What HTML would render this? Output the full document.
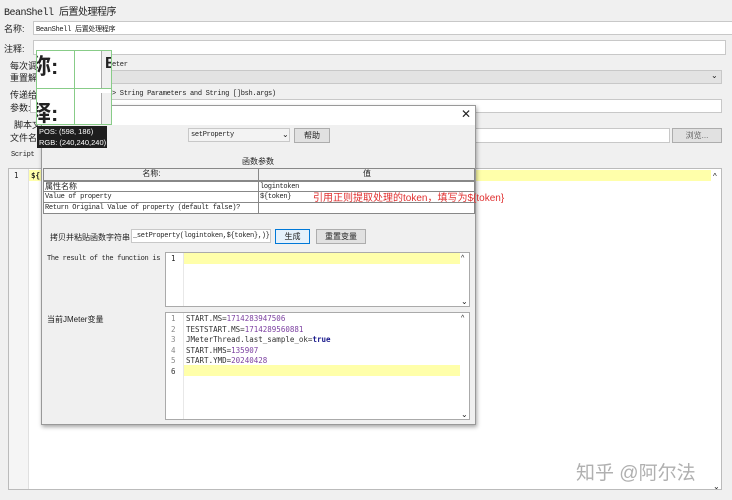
<!DOCTYPE html>
<html><head><meta charset="utf-8"><style>
*{box-sizing:border-box;margin:0;padding:0}
body{width:732px;height:500px;background:#f0f0f0;font-family:"Liberation Sans","Noto Sans CJK SC",sans-serif;font-size:9px;color:#222;position:relative;overflow:hidden}
.a{position:absolute;white-space:nowrap}
.in{position:absolute;background:#fff;border:1px solid #c8c8c8}
.mono{font-family:"Liberation Mono","Noto Sans CJK SC",monospace;font-size:7px;letter-spacing:-0.3px}
.btn{position:absolute;background:#e1e1e1;border:1px solid #adadad;text-align:center;font-size:8px}
.cell{position:absolute;border:1px solid #888;background:#fff;font-family:"Liberation Mono","Noto Sans CJK SC",monospace;font-size:7px;letter-spacing:-0.3px;padding-left:1px;line-height:10px;overflow:hidden}
.code{font-family:"DejaVu Sans Mono",monospace;font-size:7.5px;line-height:10.5px}
</style></head><body>
<div class="a" style="left:4px;top:3px;font-size:10px;font-family:'Liberation Mono','Noto Sans CJK SC',monospace;letter-spacing:-0.5px">BeanShell 后置处理程序</div>
<div class="a" style="left:4px;top:22px">名称:</div>
<div class="in" style="left:33px;top:21px;width:700px;height:14px"></div>
<div class="a mono" style="left:36px;top:24px">BeanShell 后置处理程序</div>
<div class="a" style="left:4px;top:42px">注释:</div>
<div class="in" style="left:33px;top:40px;width:693px;height:15px"></div>
<div class="a" style="left:10px;top:59px">每次调</div>
<div class="a" style="left:10px;top:71px">重置解释</div>
<div class="a mono" style="left:112px;top:61px">eter</div>
<div class="in" style="left:100px;top:70px;width:622px;height:14px;background:#e3e3e3"></div>
<div class="a" style="left:711px;top:71px;font-size:8px">⌄</div>
<div class="a" style="left:10px;top:88px">传递给</div>
<div class="a mono" style="left:112px;top:90px">&gt; String Parameters and String []bsh.args)</div>
<div class="a" style="left:10px;top:101px">参数:</div>
<div class="in" style="left:30px;top:99px;width:692px;height:14px"></div>
<div class="a" style="left:14px;top:118px">脚本文</div>
<div class="a" style="left:10px;top:131px">文件名:</div>
<div class="in" style="left:40px;top:128px;width:630px;height:15px"></div>
<div class="btn" style="left:672px;top:128px;width:50px;height:15px;line-height:13px;color:#666">浏览...</div>
<div class="a mono" style="left:11px;top:151px">Script</div>
<div class="in" style="left:8px;top:168px;width:714px;height:322px;border-color:#bbb"></div>
<div class="a" style="left:9px;top:169px;width:20px;height:320px;background:#f5f5f5;border-right:1px solid #e0e0e0"></div>
<div class="a" style="left:29px;top:170px;width:682px;height:11px;background:#ffffaa"></div>
<div class="a code" style="left:14px;top:171px">1</div>
<div class="a code" style="left:31px;top:171px;font-weight:bold">${</div>
<div class="a" style="left:713px;top:172px;font-size:8px">^</div>
<div class="a" style="left:713px;top:482px;font-size:8px">⌄</div>
<div class="a" style="left:576px;top:458px;font-size:19px;color:#b0b0b0">知乎 @阿尔法</div>

<!-- dialog -->
<div class="a" style="left:41px;top:105px;width:435px;height:320px;background:#f0f0f0;border:1px solid #999;box-shadow:1px 2px 4px rgba(0,0,0,.35)"></div>
<div class="a" style="left:42px;top:106px;width:433px;height:19px;background:#fff"></div>
<div class="a" style="left:461px;top:107px;font-size:12px">✕</div>
<div class="in" style="left:188px;top:128px;width:102px;height:14px;background:#f3f3f3"></div>
<div class="a mono" style="left:191px;top:131px">setProperty</div>
<div class="a" style="left:282px;top:130px;font-size:8px">⌄</div>
<div class="btn" style="left:294px;top:128px;width:36px;height:15px;line-height:13px">帮助</div>
<div class="a" style="left:242px;top:156px;font-size:8px">函数参数</div>
<div class="cell" style="left:43px;top:168px;width:216px;height:13px;background:#f0f0f0;text-align:center;font-family:'Liberation Sans','Noto Sans CJK SC';font-size:8px;letter-spacing:0">名称:</div>
<div class="cell" style="left:258px;top:168px;width:217px;height:13px;background:#f0f0f0;text-align:center;font-family:'Liberation Sans','Noto Sans CJK SC';font-size:8px;letter-spacing:0">值</div>
<div class="cell" style="left:43px;top:181px;width:216px;height:11px;font-family:'Liberation Sans','Noto Sans CJK SC';font-size:8px;letter-spacing:0">属性名称</div>
<div class="cell" style="left:258px;top:181px;width:217px;height:11px">logintoken</div>
<div class="cell" style="left:43px;top:191px;width:216px;height:12px">Value of property</div>
<div class="cell" style="left:258px;top:191px;width:217px;height:12px">${token}</div>
<div class="cell" style="left:43px;top:202px;width:216px;height:12px">Return Original Value of property (default false)?</div>
<div class="cell" style="left:258px;top:202px;width:217px;height:12px"></div>
<div class="a" style="left:313px;top:189px;font-size:10px;color:#e03030">引用正则提取处理的token，填写为${token}</div>
<div class="a" style="left:50px;top:232px;font-size:8px">拷贝并粘贴函数字符串</div>
<div class="in" style="left:131px;top:229px;width:140px;height:14px;overflow:hidden"><span class="a mono" style="left:1px;top:2px">_setProperty(logintoken,${token},)}</span></div>
<div class="btn" style="left:275px;top:229px;width:35px;height:15px;line-height:13px;border-color:#0078d7;background:#e5f1fb">生成</div>
<div class="btn" style="left:316px;top:229px;width:50px;height:15px;line-height:13px">重置变量</div>
<div class="a mono" style="left:47px;top:255px">The result of the function is</div>
<div class="in" style="left:165px;top:252px;width:305px;height:55px;border-color:#aaa"></div>
<div class="a" style="left:166px;top:253px;width:18px;height:53px;border-right:1px solid #e8e8e8"></div>
<div class="a" style="left:184px;top:253px;width:276px;height:11px;background:#ffffaa"></div>
<div class="a code" style="left:171px;top:254px">1</div>
<div class="a" style="left:461px;top:255px;font-size:7px">^</div>
<div class="a" style="left:461px;top:297px;font-size:8px">⌄</div>
<div class="a" style="left:47px;top:314px;font-size:8px">当前JMeter变量</div>
<div class="in" style="left:165px;top:312px;width:305px;height:108px;border-color:#aaa"></div>
<div class="a" style="left:166px;top:313px;width:18px;height:106px;border-right:1px solid #e8e8e8"></div>
<div class="a" style="left:184px;top:365px;width:276px;height:11px;background:#ffffaa"></div>
<div class="a code" style="left:171px;top:314px;color:#888">1<br>2<br>3<br>4<br>5<br><span style="color:#333">6</span></div>
<div class="a code" style="left:186px;top:314px;color:#333">START.MS=<span style="color:#7b3fa0">1714283947506</span><br>TESTSTART.MS=<span style="color:#7b3fa0">1714289560881</span><br>JMeterThread.last_sample_ok=<b style="color:#1a1a8c">true</b><br>START.HMS=<span style="color:#7b3fa0">135907</span><br>START.YMD=<span style="color:#7b3fa0">20240428</span></div>
<div class="a" style="left:461px;top:315px;font-size:7px">^</div>
<div class="a" style="left:461px;top:410px;font-size:8px">⌄</div>

<!-- magnifier overlay -->
<div class="a" style="left:36px;top:50px;width:76px;height:75px;background:#fff;border:1px solid #8c8;overflow:hidden">
<div class="a" style="left:37px;top:0;width:1px;height:75px;background:#8c8"></div>
<div class="a" style="left:0;top:37px;width:76px;height:1px;background:#8c8"></div>
<div class="a" style="left:64px;top:0;width:12px;height:37px;background:#f0f0f0;border-left:1px solid #aaa"></div>
<div class="a" style="left:64px;top:42px;width:12px;height:33px;background:#f0f0f0;border-left:1px solid #aaa"></div>
<div class="a" style="left:-8px;top:-2px;font-size:22px;font-weight:bold">称:</div>
<div class="a" style="left:-8px;top:45px;font-size:22px;font-weight:bold">释:</div>
<div class="a" style="left:68px;top:4px;font-size:16px;font-weight:bold">E</div>
</div>
<div class="a" style="left:37px;top:126px;width:70px;height:22px;background:#1e1e1e;color:#fff;font-size:7.5px;line-height:11px;padding-left:2px">POS: (598, 186)<br>RGB: (240,240,240)</div>
</body></html>
